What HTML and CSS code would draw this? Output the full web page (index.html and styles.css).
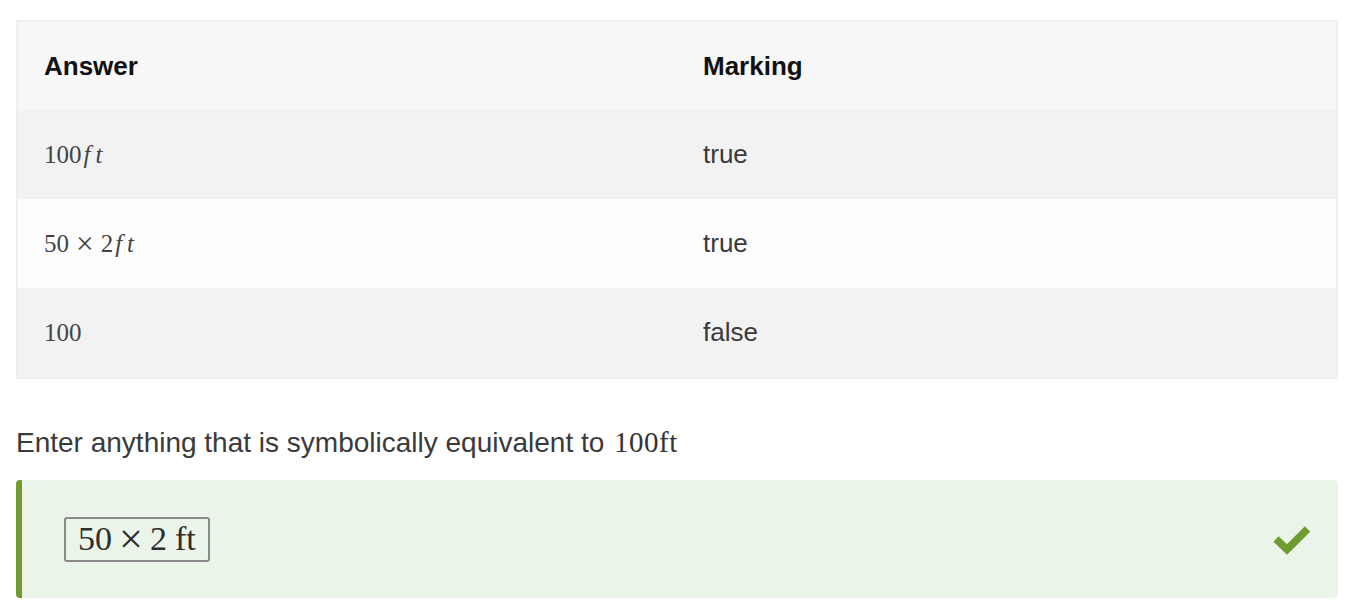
FILE: index.html
```html
<!DOCTYPE html>
<html>
<head>
<meta charset="utf-8">
<link rel="stylesheet" href="styles.css">
</head>
<body>
<table class="marks">
  <thead>
    <tr><th>Answer</th><th>Marking</th></tr>
  </thead>
  <tbody>
    <tr class="odd"><td><span class="math">100<i>ft</i></span></td><td>true</td></tr>
    <tr class="even"><td><span class="math">50<span class="op">×</span>2<i>ft</i></span></td><td>true</td></tr>
    <tr class="odd"><td><span class="math">100</span></td><td>false</td></tr>
  </tbody>
</table>
<p class="prompt">Enter anything that is symbolically equivalent to <span class="math big">100ft</span></p>
<div class="answer">
  <div class="input"><span class="math">50<span class="op">×</span>2<span class="unit">ft</span></span></div>
  <svg class="check" width="40" height="36" viewBox="0 0 40 36"><polyline points="4,18 15,28.5 35.5,8" fill="none" stroke="#6f9c31" stroke-width="7.5"/></svg>
</div>
</body>
</html>
```

FILE: styles.css
```css
body {
  margin: 20px 10px 0 16px;
  font-family: "Liberation Sans", Arial, sans-serif;
  font-size: 26px;
  color: #3a3a3a;
  background: #fff;
}
.marks {
  width: 100%;
  border-collapse: collapse;
  border: 2px solid #efefef;
  table-layout: fixed;
}
.marks th, .marks td {
  height: 89px;
  padding: 0 26px;
  text-align: left;
  vertical-align: middle;
}
.marks th {
  font-weight: bold;
  color: #111;
  background: #f7f7f7;
  height: 88px;
}
.marks tr.odd td { background: #f2f2f2; }
.marks tr.even td { background: #fdfdfd; }
.math {
  font-family: "Liberation Serif", "Times New Roman", serif;
  font-size: 25px;
  color: #444;
}
.math i {
  font-style: italic;
  letter-spacing: 5px;
  margin-left: 2px;
}
.op {
  font-size: 1.25em;
  vertical-align: -0.07em;
  line-height: 0;
  padding: 0 7px 0 7px;
}
.prompt {
  margin: 44px 0 18px;
  line-height: 38px;
  font-size: 28px;
}
.math.big { font-size: 29px; color: #333; margin-left: 2px; letter-spacing: 0.5px; }
.answer {
  display: flex;
  align-items: center;
  justify-content: space-between;
  height: 118px;
  box-sizing: border-box;
  background: #ebf4e8;
  border-left: 6px solid #6f9c31;
  border-radius: 4px;
  padding: 0 26px 0 42px;
}
.input {
  border: 2px solid #8a8a8a;
  border-radius: 3px;
  height: 45px;
  box-sizing: border-box;
  padding: 0 12px 0 12px;
  display: flex;
  align-items: center;
}
.input .math { font-size: 34px; color: #2e2e2e; }
.input .op { padding: 0 7px; }
.input .unit { margin-left: 8px; }
.check { display: block; }
```
